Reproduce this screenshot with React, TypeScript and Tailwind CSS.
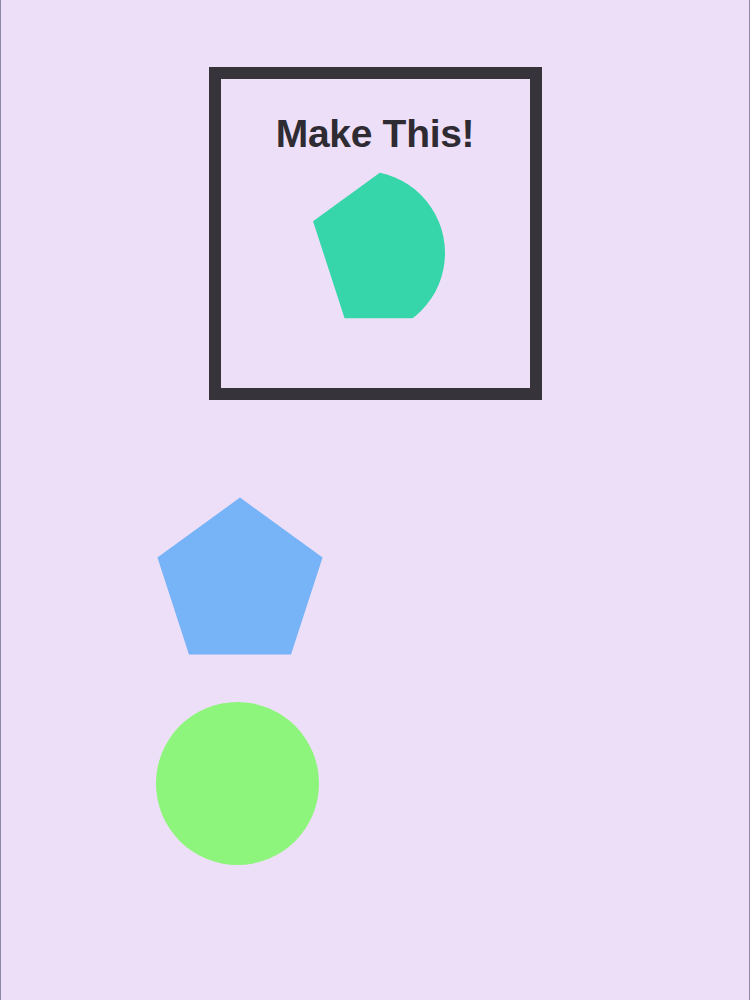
import React from 'react';

// pentagon points for a regular pentagon, pointing up
const pentagon = (cx: number, cy: number, r: number) =>
  [-90, -18, 54, 126, 198]
    .map((deg) => {
      const a = (deg * Math.PI) / 180;
      return `${(cx + r * Math.cos(a)).toFixed(2)},${(cy + r * Math.sin(a)).toFixed(2)}`;
    })
    .join(' ');

const TargetShape: React.FC = () => (
  <svg width="309" height="170" viewBox="0 0 309 170" className="block">
    <defs>
      <clipPath id="penta-clip">
        <polygon points={pentagon(174.6, 88, 86.8)} />
      </clipPath>
    </defs>
    <circle cx="142" cy="93" r="82" fill="#36d5aa" clipPath="url(#penta-clip)" />
  </svg>
);

const App: React.FC = () => {
  return (
    <div className="min-h-screen w-full bg-[#eedff8] border-x border-[#8c87a3] font-['Liberation_Sans',Arial,sans-serif]">
      <div className="pt-[67px]">
        <div className="mx-auto w-[333px] h-[333px] border-[12px] border-[#37333a] flex flex-col items-center">
          <h1 className="pt-[35px] text-[39px] leading-[39px] font-bold text-[#2f2b33] tracking-[-0.3px]">
            Make This!
          </h1>
          <div className="mt-[7px] self-start">
            <TargetShape />
          </div>
        </div>
      </div>

      <div className="flex flex-col items-start pl-[155px] pt-[97px]">
        <svg width="166" height="158" viewBox="0 0 166 158" className="block ml-[1px]">
          <polygon points={pentagon(83, 87.3, 86.8)} fill="#76b3f7" />
        </svg>
        <div className="mt-[47px] w-[163px] h-[163px] rounded-full bg-[#8df57b]" />
      </div>
    </div>
  );
};

export default App;
